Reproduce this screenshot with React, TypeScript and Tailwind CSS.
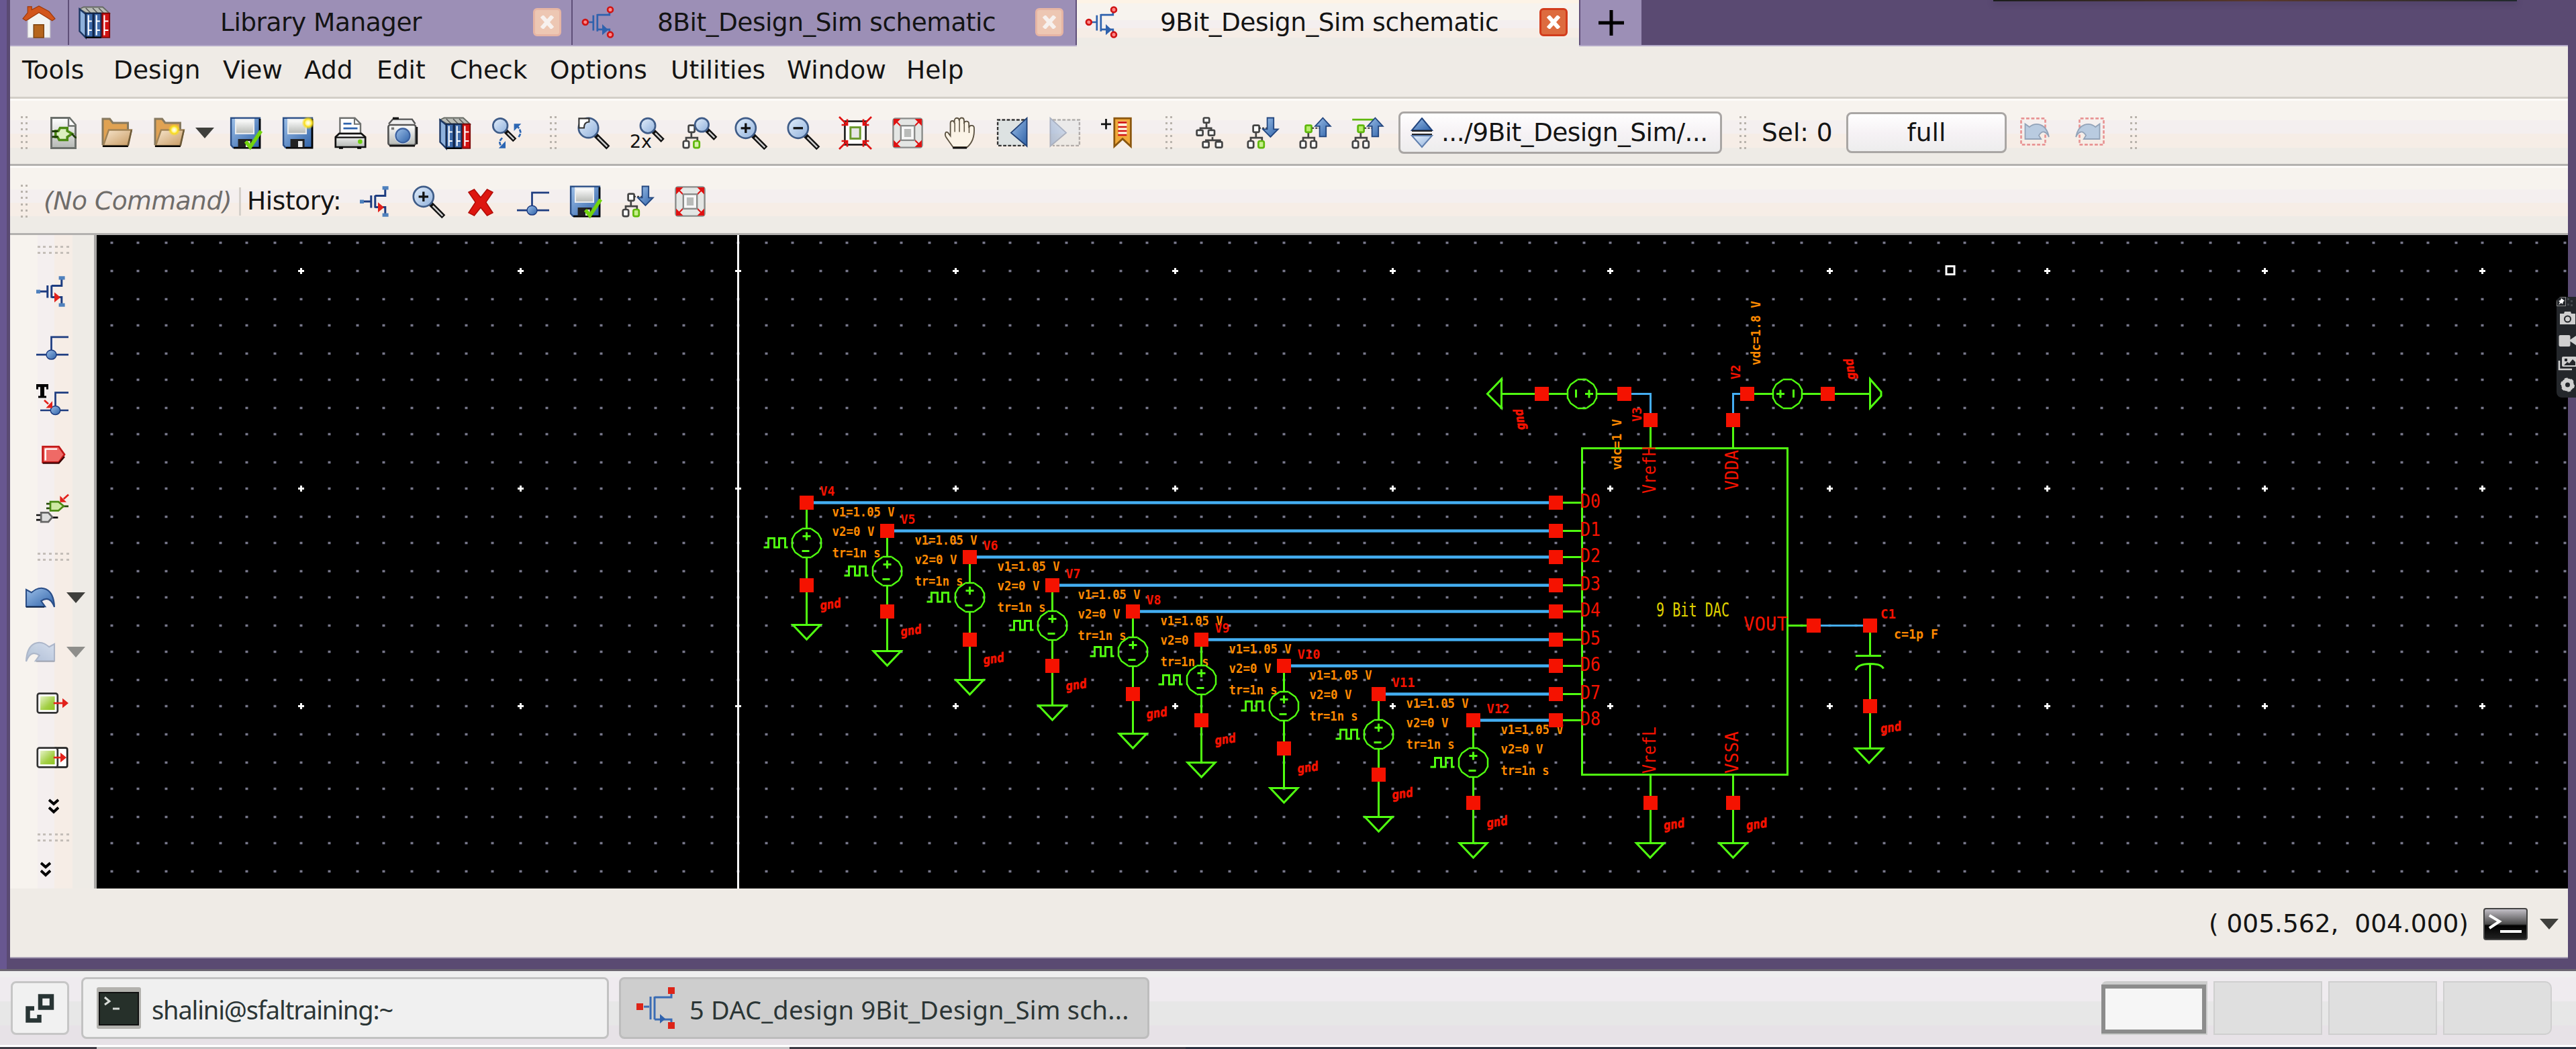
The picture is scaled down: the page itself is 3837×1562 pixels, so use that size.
import React from "react";

type Kids = { children?: React.ReactNode };

/* ---------- toolbar icons, drawn on a 16 x 16 pixel grid ---------- */

function Ico({ children, dim = false }: Kids & { dim?: boolean }) {
  return (
    <svg viewBox="0 0 16 16" className={dim ? "h-12 w-12 shrink-0 overflow-visible opacity-35" : "h-12 w-12 shrink-0 overflow-visible"} fill="none">
      {children}
    </svg>
  );
}

function Defs() {
  return (
    <svg className="absolute h-0 w-0">
      <defs>
        <linearGradient id="blue" x1="0" y1="0" x2="1" y2="1">
          <stop offset="0" stopColor="#9cbfe8" />
          <stop offset="1" stopColor="#2f62a8" />
        </linearGradient>
        <linearGradient id="glass" x1="0" y1="0" x2="1" y2="1">
          <stop offset="0" stopColor="#e4effb" />
          <stop offset="1" stopColor="#8fb0dc" />
        </linearGradient>
        <linearGradient id="tan" x1="0" y1="0" x2="1" y2="1">
          <stop offset="0" stopColor="#f8e6cd" />
          <stop offset="1" stopColor="#c79a62" />
        </linearGradient>
        <linearGradient id="grey" x1="0" y1="0" x2="0" y2="1">
          <stop offset="0" stopColor="#ffffff" />
          <stop offset="1" stopColor="#b5b8b4" />
        </linearGradient>
        <linearGradient id="green" x1="0" y1="0" x2="1" y2="1">
          <stop offset="0" stopColor="#e6f3c6" />
          <stop offset="0.6" stopColor="#a3cf45" />
          <stop offset="1" stopColor="#8fc31f" />
        </linearGradient>
        <linearGradient id="term" x1="0" y1="0" x2="0" y2="1">
          <stop offset="0" stopColor="#c8c4cc" />
          <stop offset="0.5" stopColor="#4a4a4a" />
          <stop offset="0.55" stopColor="#000" />
          <stop offset="1" stopColor="#222" />
        </linearGradient>
        <radialGradient id="spark">
          <stop offset="0" stopColor="#fff" />
          <stop offset="0.35" stopColor="#fff7a0" />
          <stop offset="0.6" stopColor="#f9dc1a" />
          <stop offset="1" stopColor="#f9dc1a" stopOpacity="0" />
        </radialGradient>
      </defs>
    </svg>
  );
}

const DocIcon = () => (
  <Ico>
    <path d="M1.5 .5h9l3 3.5v11.5h-12z" fill="url(#grey)" stroke="#6c706c" />
    <path d="M10 .5v4h3.5" fill="#fff" stroke="#6c706c" strokeWidth=".8" />
    <path d="M3.600 7h1.400l.8-1.500h3.600v1.500l2.400 1.400-2.400 1.600v1.500H5.400L4.600 10H3.600z" fill="#dcefc0" stroke="#4b8a14" strokeWidth="1.200" />
    <path d="M1.800 7.200h3M1.800 9.900h3" stroke="#1f3b08" strokeWidth="1" />
    <path d="M11.500 8.500c1 0 1 1.800 2.500 1.800" stroke="#1f3b08" strokeWidth=".9" />
  </Ico>
);

const FolderIcon = ({ spark = false }: { spark?: boolean }) => (
  <Ico>
    <path d="M1 14V1h3.5L6 3h7.5v4" fill="#e0a253" stroke="#86795f" />
    <path d="M1.3 14.3 4 6.5h11.3L13.4 14.3z" fill="url(#tan)" stroke="#a08256" strokeWidth=".8" />
    <path d="M1 14.6h12.6" stroke="#000" strokeWidth=".8" />
    <path d="M15.3 6.5 13.6 14.3" stroke="#6d5937" strokeWidth=".8" />
    {spark && <circle cx="10.5" cy="6.5" r="3" fill="url(#spark)" />}
  </Ico>
);

const SaveIcon = ({ mark }: { mark: "check" | "spark" }) => (
  <Ico>
    <path d="M.7.6h14.3v14.7H1.8L.7 14z" fill="url(#blue)" stroke="#2b4f86" strokeWidth=".8" />
    <path d="M15 1v14.4H2" stroke="#000" strokeWidth=".9" />
    <rect x="3" y="1.3" width="9" height="7" fill="url(#grey)" stroke="#e9ecee" strokeWidth=".7" />
    <rect x="4.2" y="11" width="7" height="4.2" fill="#222" />
    <rect x="8" y="12" width="2.2" height="3" fill="#e8e8e8" />
    {mark === "check" ? (
      <path d="M8 12.2 10.2 15 15.6 7" stroke="#72d40c" strokeWidth="1.8" />
    ) : (
      <circle cx="13" cy="3" r="3.2" fill="url(#spark)" />
    )}
  </Ico>
);

const PrintIcon = () => (
  <Ico>
    <path d="M2.8 9V.6h7.4L13 3.4V9" fill="#fff" stroke="#6f716f" strokeWidth=".8" />
    <path d="M10 .6v3h3" stroke="#6f716f" strokeWidth=".7" />
    <path d="M4.5 3.4h4M4.5 5.7h7" stroke="#2c62ad" strokeWidth=".9" />
    <path d="M.6 15V10l1.8-1.7h11L15.4 10v5z" fill="url(#grey)" stroke="#111" strokeWidth=".9" />
    <path d="M.6 10.2h14.8" stroke="#111" strokeWidth=".8" />
    <circle cx="12.8" cy="12.3" r="1.1" fill="#6fd010" />
    <path d="M2.3 15.3h2M11.4 15.3h2" stroke="#000" strokeWidth="1.2" />
  </Ico>
);

const CameraIcon = () => (
  <Ico>
    <path d="M1 3.5 3 1.2h9.6l1.6 2.3" fill="#eee" stroke="#555" strokeWidth=".8" />
    <path d="M3 .7h3" stroke="#111" />
    <rect x=".8" y="4" width="13.6" height="10" rx="1" fill="url(#grey)" stroke="#555" strokeWidth=".9" />
    <path d="M15 5v8.6M1.4 14.4h12.6" stroke="#111" strokeWidth=".8" />
    <circle cx="8" cy="9.3" r="4.1" fill="#dbe8f8" />
    <circle cx="8" cy="9.3" r="3.5" fill="url(#blue)" stroke="#3b5f9c" strokeWidth=".7" />
    <rect x="2.3" y="5.2" width="1.4" height="1.2" fill="#777" />
  </Ico>
);

const BooksIcon = () => (
  <Ico>
    <path d="M.5 1.5 2.500 .5h9.500l3.300 3H4z" fill="#b9bcb6" stroke="#666a63" strokeWidth=".6" />
    <path d="M3.600 1l2.400 2.400M7 1l2.400 2.400M10 1l2.400 2.400" stroke="#555" strokeWidth=".5" />
    <path d="M.5 1.500 3.600 4v11.700L.5 12.500z" fill="#8eb1dc" stroke="#1c3764" strokeWidth=".8" />
    <rect x="3.600" y="3.600" width="3.600" height="12" fill="#3c69a9" stroke="#12264a" strokeWidth=".7" />
    <rect x="7.600" y="3.600" width="3.600" height="12" fill="#3c69a9" stroke="#12264a" strokeWidth=".7" />
    <rect x="11.700" y="3.600" width="3.700" height="12" fill="#d31212" stroke="#7d0808" strokeWidth=".6" />
    <path d="M4.600 7.500h2M4.600 12h2M8.600 7.500h2M8.600 12h2M12.600 7.500h2.200M12.600 12h2.200M4.900 4.500v10M8.900 4.500v10M12.800 4.500v10" stroke="#fff" strokeWidth=".7" />
    <path d="M3.600 15.600h7.600" stroke="#000" strokeWidth=".8" />
  </Ico>
);

function Glass({ x = 0, y = 0, r = 4.8, sign }: { x?: number; y?: number; r?: number; sign?: "+" | "-" }) {
  const e = r * 0.72;
  return (
    <g transform={`translate(${x} ${y})`}>
      <path d={`M${e} ${e}L${r * 2} ${r * 2}`} stroke="#111" strokeWidth="2.4" />
      <path d={`M${e + 1} ${e + 1}L${r * 2 - 0.5} ${r * 2 - 0.5}`} stroke="#cfcfcf" strokeWidth=".8" />
      <circle r={r} fill="url(#glass)" stroke="#3f5c88" strokeWidth=".9" />
      {sign && <path d={sign === "+" ? "M-2.4 0h4.8M0-2.4v4.8" : "M-2.4 0h4.8"} stroke="#111" strokeWidth="1.1" />}
    </g>
  );
}

const SwapFindIcon = () => (
  <Ico>
    <Glass x={4.4} y={4.4} r={3.6} />
    <path d="M13.500 10c1.600-2 1-3.600-.8-5.400M5.400 10.500c-1.800 1.400-1.600 3 0 4.500" stroke="#2d66b3" strokeWidth=".9" strokeDasharray="1.800 .5" />
    <path d="M11.200 3.400h3.600L11.200 7zM7 12v3.600H3.600z" fill="#2d66b3" />
  </Ico>
);
const ZoomAreaIcon = () => (
  <Ico>
    <Glass x={5.5} y={5.5} r={4.9} />
    <path d="M.8 5.5V.8h5v1.700c-2 0-2.500 1.500-2.500 3z" fill="#fff" stroke="#333" strokeWidth=".7" />
  </Ico>
);
const Zoom2xIcon = () => (
  <Ico>
    <Glass x={9} y={4.4} r={3.7} />
    <text x="0" y="15.2" fontFamily="DejaVu Sans" fontSize="9" fill="#111" textLength="11" lengthAdjust="spacingAndGlyphs">2x</text>
  </Ico>
);
const ZoomIcon = ({ sign }: { sign: "+" | "-" }) => (
  <Ico>
    <Glass x={5.6} y={5.6} r={5} sign={sign} />
  </Ico>
);

function Tree({ a = "#fff", b = "#fff", x = 0 }: { a?: string; b?: string; x?: number }) {
  return (
    <g transform={`translate(${x} 0)`} stroke="#444" strokeWidth=".9">
      <path d="M4.6 8v2.4M2 12.2v-1.8h5.6v1.8" />
      <rect x="3.2" y="4.2" width="3" height="3.400" rx=".6" fill={a} stroke={a === "#fff" ? "#444" : "#5fb80c"} />
      <rect x=".6" y="12" width="2.8" height="3.4" rx=".8" fill="#fff" />
      <rect x="5.8" y="12" width="2.8" height="3.4" rx=".8" fill={b} stroke={b === "#fff" ? "#444" : "#5fb80c"} />
    </g>
  );
}
const ZoomTreeIcon = () => (
  <Ico>
    <Tree b="#d8f2b0" />
    <Glass x={9.8} y={4} r={3.4} />
  </Ico>
);
const TreeIcon = () => (
  <Ico>
    <g stroke="#444" strokeWidth=".9" fill="#fff">
      <path d="M6 3v2.5M3 8V5.6h5.4V8M9 10v2M5.8 14v-2.4h7V14" fill="none" />
      <rect x="4.6" y=".5" width="2.8" height="2.4" rx=".5" />
      <rect x="1.2" y="6.6" width="3" height="2.6" rx=".5" />
      <rect x="7" y="6.6" width="3" height="2.6" rx=".5" />
      <rect x="4.2" y="12.4" width="3" height="2.8" rx=".6" />
      <rect x="10.6" y="12.4" width="3.2" height="2.8" rx=".6" />
    </g>
  </Ico>
);
const DescendIcon = () => (
  <Ico>
    <Tree b="#c8f08c" />
    <path d="M6 5.600h5" stroke="#333" strokeWidth=".7" strokeDasharray="1 .7" />
    <path d="M10.2.5h3.2v5.6h2.2L11.8 10 8 6.1h2.2z" fill="url(#blue)" stroke="#23467f" strokeWidth=".6" />
  </Ico>
);
const AscendIcon = ({ bar = false }: { bar?: boolean }) => (
  <Ico>
    <Tree a="#b6ee6c" />
    {bar && <path d="M.4 1.400h11" stroke="#5fb80c" strokeWidth=".9" />}
    <path d="M6.400 5.600h4" stroke="#333" strokeWidth=".7" strokeDasharray="1 .7" />
    <path d="M10.2 9.8h3.2V4.6h2.2L11.8.5 8 4.6h2.2z" fill="url(#blue)" stroke="#23467f" strokeWidth=".6" />
  </Ico>
);

const FitIcon = ({ out = false }: { out?: boolean }) =>
  out ? (
    <Ico>
      <rect x=".8" y=".8" width="14.4" height="14.4" rx="1.2" fill="#e4e6e4" stroke="#8a8c8a" strokeWidth=".8" />
      <path d="M1 1h3.500L1 4.500zM15 1h-3.500l3.500 3.500zM1 15h3.500l-3.500-3.500zM15 15h-3.500l3.500-3.500z" fill="#e01212" />
      <path d="M2 2 5 5M14 2l-3 3M2 14l3-3M14 14l-3-3" stroke="#e01212" strokeWidth=".7" />
      <rect x="4.6" y="4.4" width="6.800" height="7.2" fill="#f7f7f7" stroke="#8a8c8a" strokeWidth=".8" />
      <rect x="6.3" y="6" width="3.4" height="4" fill="#b9bbb9" />
    </Ico>
  ) : (
    <Ico>
      <rect x="2.8" y="2.2" width="10.4" height="11.6" fill="#fff" stroke="#222" strokeWidth=".9" />
      <rect x="5.6" y="5.2" width="4.8" height="5.6" fill="#e6e6e6" stroke="#6b9a2c" strokeWidth="1" />
      <path d="M0 0 3.6 3.6M16 0l-3.6 3.6M0 16l3.6-3.6M16 16l-3.6-3.6M4 1.200V4H1.200M12 1.200V4h2.800M4 14.800V12H1.200M12 14.800V12h2.800" stroke="#e01212" strokeWidth=".9" />
    </Ico>
  );

const HandIcon = () => (
  <Ico>
    <path d="M4.500 15 1 10C.2 8.400 .8 7 2 7.800L3.200 9.400V3.200c0-1.600 2-1.600 2 0V2c0-1.900 2.400-1.900 2.400 0 0-2 2.400-2 2.400 0v1.400c0-1.600 2.400-1.600 2.400 0v2c.2-1.500 2.600-1.500 2.600 .2C15.200 9.400 14.400 12.600 11.600 15z" fill="#fbf3e6" stroke="#5b5140" strokeWidth=".6" />
    <path d="M5.400 3v4.500M7.700 2v5.500M10.100 3v4.500M12.500 5v3" stroke="#5b5140" strokeWidth=".5" />
    <path d="M4.4 15.4h7" stroke="#111" strokeWidth=".9" />
  </Ico>
);
const PrevIcon = ({ dim = false }: { dim?: boolean }) => (
  <Ico dim={dim}>
    <g transform={dim ? "matrix(-1 0 0 1 16 0)" : undefined}>
      <path d="M14 1.5H.7v12.8H14" fill="#dde2e2" stroke="#333" strokeWidth=".8" strokeDasharray="1.6 .8" />
      <path d="M15.2.6v14L7.3 7.9z" fill="url(#blue)" stroke="#1f3f73" strokeWidth=".6" />
    </g>
  </Ico>
);
const BookmarkIcon = () => (
  <Ico>
    <path d="M0 3.6h5M2.5 1v5.2" stroke="#111" strokeWidth=".9" />
    <path d="M6.6.7h8.2v14l-4.1-3.8-4.1 3.8z" fill="#f0a93a" stroke="#8a560e" strokeWidth=".9" />
    <path d="M8.6 2.2h4.2v7H8.6z" fill="#fff3dc" />
    <path d="M8.4 2.8h4.4M8.4 5h4.4M8.4 7h4.4M8.4 9h4.4" stroke="#d11515" strokeWidth=".9" />
  </Ico>
);
const SelHistIcon = ({ flip = false }: { flip?: boolean }) => (
  <Ico>
    <g transform={flip ? "matrix(-1 0 0 1 16 0)" : undefined}>
      <rect x=".5" y=".8" width="12" height="13" stroke="#e89494" strokeWidth=".9" strokeDasharray="1.6 .9" />
      <path d="M2.500 3.500 4.600 5C7.600 2.600 13 3 14.300 10c-1.400-3-3.400-3.400-5-.8L10.400 11H2.500z" fill="#b9cbe0" stroke="#93a3b8" strokeWidth=".6" />
    </g>
  </Ico>
);

/* ---------- editing icons ---------- */

const InstanceIcon = () => (
  <Ico>
    <path d="M2 8h3.5M5.6 5v6.2M7.6 5v6.2M7.6 5.2h5V1.5M7.6 10.8h5v3.6" stroke="#1d3c80" strokeWidth="1" />
    <path d="M9 8.4v5l3-2.5z" fill="#e2211b" />
    <path d="M0 7.2h2v1.8H0zM11.2.4h3v1.8h-3zM11.2 13.8h3v1.8h-3z" fill="#4f81bd" />
  </Ico>
);
const WireIcon = () => (
  <Ico>
    <path d="M0 12.4h16M7.5 12.4V3.6H16" stroke="#1d3c80" strokeWidth=".9" />
    <ellipse cx="7.5" cy="12.4" rx="2.5" ry="2.3" fill="url(#blue)" stroke="#1d3c80" strokeWidth=".5" />
  </Ico>
);
const LabelIcon = () => (
  <Ico>
    <path d="M2 13h14M9.5 13V4.2H16" stroke="#1d3c80" strokeWidth=".9" />
    <ellipse cx="9.5" cy="13" rx="2.4" ry="2.2" fill="url(#blue)" stroke="#1d3c80" strokeWidth=".5" />
    <path d="M0 0h6v2.6H5V1.4H4v4.4h1v1H1v-1h1V1.4H1v1.2H0z" fill="#000" />
    <path d="M4 8l2 1.8" stroke="#e2211b" strokeWidth=".9" />
    <path d="M8 8.4v3.4H4.8z" fill="#e2211b" />
  </Ico>
);
const PinIcon = () => (
  <Ico>
    <path d="M3.2 4h8L14 7.9l-2.8 3.9h-8z" fill="#ef6a66" stroke="#c11616" strokeWidth=".9" />
    <path d="M4.4 5.2h6M4.6 5v5.8" stroke="#fff" strokeWidth=".8" />
    <path d="M3.2 12.2h8L14 9" stroke="#3d0505" strokeWidth=".8" />
  </Ico>
);
const PlugIcon = () => (
  <Ico>
    <path d="M5 5.4h2M5 7.6h2M13 6.6h3" stroke="#274d0a" strokeWidth=".9" />
    <path d="M7 4.4h4l2.6 2.1L11 8.8H7z" fill="#cfe8a3" stroke="#4b8a14" strokeWidth=".9" />
    <path d="M0 11h2.4M0 13.4h2.4M7.8 12.2h3" stroke="#111" strokeWidth=".9" />
    <path d="M2.4 9.8H6l2 2.2-2 2.4H2.4z" fill="#ddd" stroke="#666" strokeWidth=".9" />
    <path d="M16 .8 13.6 3" stroke="#e2211b" strokeWidth=".9" />
    <path d="M11.8 1.4v3.2H15z" fill="#e2211b" />
  </Ico>
);
const UndoIcon = ({ redo = false }: { redo?: boolean }) => (
  <Ico dim={redo}>
    <g transform={redo ? "matrix(-1 0 0 1 16 0)" : undefined}>
      <path d="M1 4 3.6 5.4C8 1.4 14.6 2.6 15 12.6 13.6 8.8 11.4 7.6 8.4 9.6L10.4 12.4H1z" fill="url(#blue)" stroke="#2a4e88" strokeWidth=".7" />
      <path d="M1 12.6h9" stroke="#0d2244" strokeWidth=".6" />
    </g>
  </Ico>
);
const MoveIcon = ({ copy = false }: { copy?: boolean }) => (
  <Ico>
    {copy && <rect x="9" y="3.2" width="6.4" height="9.6" rx=".8" fill="#fff" stroke="#222" strokeWidth=".9" />}
    <rect x=".6" y="3.2" width="10" height="9.6" rx="1" fill="#fff" stroke="#333" strokeWidth=".9" />
    <rect x="2" y="4.6" width="7.2" height="6.8" fill="url(#green)" />
    <path d="M8.6 8h5" stroke="#e2211b" strokeWidth=".9" />
    <path d={copy ? "M12 5.6v4.8L15 8z" : "M13 5.6v4.8L16 8z"} fill="#e2211b" />
  </Ico>
);
const CrossIcon = () => (
  <Ico>
    <path d="M2 3.400 4.800 2l3.200 4 3.200-4 2.800 1.400L10.600 8.400l3.400 5.200L11.200 15 8 11l-3.200 4-2.800-1.400 3.400-5.200z" fill="#dd1610" stroke="#b10c08" strokeWidth=".5" />
  </Ico>
);
const NmosIcon = () => (
  <Ico>
    <path d="M3 8h2.4M5.6 4.6v7.6M7.6 4v8.6M7.6 4.4h6V2M7.6 11.6h6V14" stroke="#2f62ad" strokeWidth=".9" />
    <path d="M10 9v5.4l3-2.6z" fill="#2f62ad" />
    <circle cx="1.6" cy="8" r="1.3" fill="#f88" stroke="#cf1414" strokeWidth=".9" />
    <circle cx="14" cy="1.8" r="1.3" fill="#f88" stroke="#cf1414" strokeWidth=".9" />
    <circle cx="14" cy="14.2" r="1.3" fill="#f88" stroke="#cf1414" strokeWidth=".9" />
  </Ico>
);
const HomeIcon = () => (
  <Ico>
    <path d="M2.4 7.4 8 2.4l5.6 5V16H2.4z" fill="#f3f3f1" stroke="#c4c0c8" strokeWidth=".4" />
    <path d="M0 6.600 2.400 3.600V.6h2v1.600L8 .3 13 3l3 3.600-1.400 1L8 3.600 1.600 7.600z" fill="#d2551c" stroke="#9d3a0c" strokeWidth=".4" />
    <path d="M5.4 9.6h5V16h-5z" fill="#b5651d" stroke="#7d4410" strokeWidth=".5" />
  </Ico>
);

/* ---------- small chrome pieces ---------- */

const Grip = ({ className = "" }: { className?: string }) => (
  <div className={`grid h-[50px] w-[13px] shrink-0 grid-cols-2 content-between justify-between ${className}`}>
    {Array.from({ length: 12 }, (_, i) => (
      <span key={i} className="h-[3px] w-[3px] bg-[#b9b3ac]" />
    ))}
  </div>
);
const GripH = () => (
  <div className="grid w-[52px] shrink-0 grid-cols-6 gap-y-[6px]">
    {Array.from({ length: 12 }, (_, i) => (
      <span key={i} className="h-[3px] w-[4px] bg-[#c4beb8]" />
    ))}
  </div>
);
const Tri = ({ dim = false }: { dim?: boolean }) => (
  <svg viewBox="0 0 28 16" className="h-4 w-7 shrink-0">
    <path d="M0 0h28L14 16z" fill={dim ? "#8e8e8b" : "#3f3f3c"} />
  </svg>
);
const Chevrons = () => (
  <svg viewBox="0 0 16 25" className="h-[25px] w-4 shrink-0" fill="none" stroke="#000" strokeWidth="4">
    <path d="M1 3l7 6 7-6M1 14.500l7 6.500 7-6.500" />
  </svg>
);
const CloseBox = ({ active = false }: { active?: boolean }) => (
  <div
    className={
      active
        ? "flex h-[42px] w-[42px] items-center justify-center rounded-[6px] border-[3px] border-[#d23c1c] bg-[#dd6b3f]"
        : "flex h-[42px] w-[42px] items-center justify-center rounded-[6px] border-[3px] border-[#e6b5a4] bg-[#edc7b3]"
    }
  >
    <svg viewBox="0 0 20 20" className="h-5 w-5" stroke={active ? "#fff" : "#f7f1ee"} strokeWidth="6">
      <path d="M2 1 18 19M18 1 2 19" />
    </svg>
  </div>
);

/* ---------- schematic ---------- */

const GREEN = "#50ff10";
const RED = "#f51200";
const BLUE = "#45aef2";
const ORANGE = "#ff8a00";

function Txt({ x, y, w, s = 20, c = RED, up = false, bold = true, children }: { x: number; y: number; w: number; s?: number; c?: string; up?: boolean; bold?: boolean; children: string }) {
  return (
    <text
      x={x}
      y={y}
      fontSize={s}
      fill={c}
      fontWeight={bold ? 700 : 400}
      fontFamily="DejaVu Sans Mono, monospace"
      textLength={w}
      lengthAdjust="spacingAndGlyphs"
      transform={up ? `rotate(-90 ${x} ${y})` : undefined}
    >
      {children}
    </text>
  );
}
const Sq = ({ x, y }: { x: number; y: number }) => <rect x={x - 10.5} y={y - 10.5} width="21" height="21" fill={RED} />;

/* ground net name, drawn at a slight slant */
function Gnd({ x, y, rot = 0 }: { x: number; y: number; rot?: number }) {
  return (
    <g transform={`translate(${x} ${y}) rotate(${rot}) skewY(-8)`}>
      <text fontSize="19" fontWeight="700" fill={RED} stroke={RED} strokeWidth=".6" fontFamily="DejaVu Sans Mono, monospace" textLength="31" lengthAdjust="spacingAndGlyphs">
        gnd
      </text>
    </g>
  );
}
const Arrow = ({ x, y, rot = 0 }: { x: number; y: number; rot?: number }) => (
  <path d="M-20.500 0h41L0 21.500z" transform={`translate(${x} ${y}) rotate(${rot})`} />
);
const Ring = ({ x, y }: { x: number; y: number }) => (
  <g strokeWidth="2.500">
    <path d={`M${x - 7} ${y - 21.5}h14M${x - 7} ${y + 21.5}h14M${x - 21.5} ${y - 7}v14M${x + 21.5} ${y - 7}v14`} />
    <path
      d={`M${x - 7} ${y - 21}L${x - 17} ${y - 14}L${x - 21.5} ${y - 6}M${x + 7} ${y - 21}L${x + 17} ${y - 14}L${x + 21.5} ${y - 6}M${x - 7} ${y + 21}L${x - 17} ${y + 14}L${x - 21.5} ${y + 6}M${x + 7} ${y + 21}L${x + 17} ${y + 14}L${x + 21.5} ${y + 6}`}
    />
  </g>
);

type Src = { n: string; x: number; y: number; c: number; sq: number; g: number; tx: number };
const sources: Src[] = [
  { n: "V4", x: 1201.5, y: 748.5, c: 60, sq: 123, g: 182, tx: 38 },
  { n: "V5", x: 1321.5, y: 790.5, c: 60, sq: 120, g: 179, tx: 41 },
  { n: "V6", x: 1444.5, y: 829.5, c: 60, sq: 123, g: 183, tx: 41 },
  { n: "V7", x: 1567.5, y: 871.5, c: 60, sq: 120, g: 179, tx: 38 },
  { n: "V8", x: 1687.5, y: 910.5, c: 60, sq: 123, g: 182, tx: 41 },
  { n: "V9", x: 1789.5, y: 952.5, c: 60, sq: 120, g: 183, tx: 41 },
  { n: "V10", x: 1912.5, y: 991.5, c: 60, sq: 123, g: 182, tx: 38 },
  { n: "V11", x: 2053.5, y: 1033.5, c: 60, sq: 120, g: 183, tx: 41 },
  { n: "V12", x: 2194.5, y: 1072.5, c: 63, sq: 123, g: 183, tx: 41 },
];

const colX = (k: number) => 448.5 + 3 * Math.ceil(13.536 * k);
const rowY = (k: number) => 403.5 + 3 * (k < 0 ? -14 : Math.ceil(13.52 * k - 0.35));
const cols = Array.from({ length: 91 }, (_, i) => i - 7);
const rows = Array.from({ length: 24 }, (_, i) => i - 1);

function Grid() {
  const minor: string[] = [];
  const major: string[] = [];
  for (const i of cols)
    for (const j of rows) {
      const x = colX(i);
      const y = rowY(j);
      if (i % 8 === 0 && j % 8 === 0) major.push(`M${x - 4.5} ${y}h9M${x} ${y - 4.5}v9`);
      else minor.push(`M${x - 2} ${y}h4`);
    }
  return (
    <g>
      <path d={minor.join("")} stroke="#77778a" strokeWidth="3.500" />
      <path d={major.join("")} stroke="#fff" strokeWidth="3" />
    </g>
  );
}

function Schematic() {
  return (
    <svg viewBox="144 350 3681 973" className="h-[973px] w-[3681px] shrink-0 bg-black" fill="none" strokeWidth="3">
      <Grid />
      <path d="M1099.500 350v973" stroke="#fff" />
      <rect x="2899" y="396.500" width="12" height="12" stroke="#fff" />

      <g fill={ORANGE}>
        {sources.map((s) => (
          <g key={s.n}>
            <Txt x={s.x + s.tx} y={s.y + 20} w={93} c={ORANGE}>v1=1.05 V</Txt>
            <Txt x={s.x + s.tx} y={s.y + 49} w={63} c={ORANGE}>v2=0 V</Txt>
            <Txt x={s.x + s.tx} y={s.y + 81} w={72} c={ORANGE}>tr=1n s</Txt>
            <Txt x={s.x + 20} y={s.y - 11} w={s.n.length > 2 ? 34 : 22}>{s.n}</Txt>
            <Gnd x={s.x + 20} y={s.y + s.sq + 37} />
          </g>
        ))}
      </g>

      <g stroke="#2f7fae" strokeWidth="5">
        {sources.map((s) => (
          <path key={s.n} d={`M${s.x} ${s.y}H2317`} />
        ))}
      </g>
      <g stroke={BLUE}>
        {sources.map((s) => (
          <path key={s.n} d={`M${s.x} ${s.y}H2317`} />
        ))}
        <path d="M2419.500 586.500h39v39M2602.500 586.500h-21v39M2701.500 931.500h84" />
      </g>

      <g stroke={GREEN}>
        {sources.map((s) => {
          const cy = s.y + s.c;
          return (
            <g key={s.n}>
              <path d={`M${s.x} ${s.y}V${cy - 21}M${s.x} ${cy + 21}V${s.y + s.g}M2317 ${s.y}H2356`} />
              <Ring x={s.x} y={cy} />
              <path d={`M${s.x - 6} ${cy - 10}h12M${s.x} ${cy - 16}v12M${s.x - 7} ${cy + 12}h11`} />
              <path d={`M${s.x - 64} ${cy + 6.5}h7v-13.500h9v13.500h7v-13.500h9v13.500h4`} />
              <Arrow x={s.x} y={s.y + s.g} />
            </g>
          );
        })}
        <path d="M2356.500 667.500h306v486h-306z" />
        <path d="M2236.500 586.500H2335M2378 586.500h42M2458.500 625.500v42M2581.500 625.500v42M2602.500 586.500h38M2683.500 586.500h102" />
        <Ring x={2356.5} y={586.5} />
        <Ring x={2662.5} y={586.5} />
        <path d="M2347.500 580v12M2361 586.500h12M2367 580.500v12M2646 586.500h12M2652 580.500v12M2671.500 580v12" />
        <path d="M2236.500 564.500v43L2215.500 586.500zM2785.500 564.500v43l16.500-18v-6z" />
        <path d="M2662.500 931.500h39M2785.500 931.500v45M2764 976.500h38M2785.500 988.500v126M2764 998c2-6 9-9.500 21.500-9.500s18 3 20 7" />
        <Arrow x={2784} y={1114.5} />
        <path d="M2458.500 1153.500v102M2581.500 1153.500v102" />
        <Arrow x={2458} y={1255.5} />
        <Arrow x={2581.5} y={1255.5} />
      </g>

      {sources.map((s, i) => (
        <g key={s.n}>
          <Sq x={s.x} y={s.y} />
          <Sq x={s.x} y={s.y + s.sq} />
          <Sq x={2317.5} y={s.y} />
          <Txt x={2354} y={s.y + 7.5} w={30} s={28} bold={false}>{`D${i}`}</Txt>
        </g>
      ))}
      {[
        [2296.5, 586.5],
        [2419.5, 586.5],
        [2458.5, 625.5],
        [2581.5, 625.5],
        [2602.5, 586.5],
        [2722.5, 586.5],
        [2701.5, 931.5],
        [2785.5, 931.5],
        [2785.5, 1051.5],
        [2458.5, 1195.5],
        [2581.5, 1195.5],
      ].map(([x, y]) => (
        <Sq key={`${x}-${y}`} x={x} y={y} />
      ))}

      <Txt x={2466} y={735} w={70} s={27} bold={false} up>VrefH</Txt>
      <Txt x={2589} y={730} w={60} s={27} bold={false} up>VDDA</Txt>
      <Txt x={2466} y={1152} w={70} s={27} bold={false} up>VrefL</Txt>
      <Txt x={2589} y={1152} w={63} s={27} bold={false} up>VSSA</Txt>
      <Txt x={2445} y={628} w={22} up>V3</Txt>
      <Txt x={2592} y={565} w={22} up>V2</Txt>
      <Txt x={2415} y={700} w={76} c={ORANGE} up>vdc=1 V</Txt>
      <Txt x={2622} y={544} w={96} c={ORANGE} up>vdc=1.8 V</Txt>
      <Txt x={2467} y={918} w={109} s={28} c="#e0d400" bold={false}>9 Bit DAC</Txt>
      <Txt x={2597} y={938.5} w={66} s={28} bold={false}>VOUT</Txt>
      <Txt x={2801} y={920.5} w={23}>C1</Txt>
      <Txt x={2821} y={951} w={66} c={ORANGE}>c=1p F</Txt>
      <Gnd x={2801} y={1092} />
      <Gnd x={2478} y={1236} />
      <Gnd x={2601} y={1236} />
      <Gnd x={2272} y={640} rot={-90} />
      <Gnd x={2764} y={565} rot={-90} />
    </svg>
  );
}

/* ---------- overlay of the screen recorder ---------- */

const Recorder = () => (
  <div className="absolute right-0 top-[442px] flex h-[150px] w-[29px] flex-col overflow-hidden rounded-l-[8px] bg-[#24272b]">
    <svg viewBox="0 0 29 150" className="h-[150px] w-[29px]" fill="#cfcfcf">
      <rect x=".5" y=".5" width="13" height="13" fill="none" stroke="#888" />
      <path d="M7 2l5 4-2 1-1 4-2-2-4 3 2-4-2-2 3-1z" fill="#fff" />
      <path d="M16 2h3v3h-3zM21 5h3v3h-3zM16 10h3v3h-3zM21 11h3v3h-3z" fill="#43474c" />
      <path d="M5 25h6l1-3h9l1 3h6v16H5z" />
      <circle cx="16.500" cy="33" r="4.500" fill="none" stroke="#24272b" strokeWidth="2" />
      <rect x="3.500" y="57" width="17" height="17" rx="2" />
      <path d="M20 64l9-6v14l-9-6z" />
      <path d="M4 95v13h19" fill="none" stroke="#cfcfcf" strokeWidth="2.500" />
      <rect x="8" y="89" width="22" height="15" rx="2" />
      <path d="M11 102l5-5 3 2 5-6 4 4v5zM12 92h4v4h-4z" fill="#24272b" />
      <circle cx="16.500" cy="131" r="6.500" fill="none" stroke="#cfcfcf" strokeWidth="6" />
      <circle cx="16.500" cy="131" r="9" fill="none" stroke="#cfcfcf" strokeWidth="3" strokeDasharray="4.700 4.700" />
    </svg>
  </div>
);

const menu: [string, string][] = [
  ["Tools", "w-[136px]"],
  ["Design", "w-[163px]"],
  ["View", "w-[121px]"],
  ["Add", "w-[108px]"],
  ["Edit", "w-[109px]"],
  ["Check", "w-[149px]"],
  ["Options", "w-[180px]"],
  ["Utilities", "w-[173px]"],
  ["Window", "w-[178px]"],
  ["Help", "w-[120px]"],
];

export default function App() {
  return (
    <div className="relative flex h-[1562px] w-[3837px] flex-col overflow-hidden bg-[#5a4a72] font-['DejaVu_Sans',sans-serif] text-[37.5px] leading-none text-[#141414]">
      <Defs />
      <div className="absolute left-[2969px] top-0 h-[2px] w-[780px] bg-linear-to-r from-[#1b1d1c] via-[#5a382c] to-[#20282c] shadow-[0_3px_8px_#3b304e]" />

      <div className="flex h-[1443px] border-l-[10px] border-[#685790] pl-[5px]">
        <div className="flex w-[3810px] flex-col">
          {/* window tabs */}
          <div className="flex h-[69px] shrink-0 border-b-2 border-[#b4a9c8]">
            <div className="flex w-[88px] items-center justify-center border-r-2 border-[#5f4f78] bg-[#9c8fb6] pb-1">
              <HomeIcon />
            </div>
            <div className="flex w-[750px] items-center border-r-2 border-[#5f4f78] bg-[#9c8fb6] pb-[2px] pl-[14px]">
              <BooksIcon />
              <span className="w-[629px] whitespace-nowrap pl-[163px] pt-[2px] tracking-[-0.5px]">Library Manager</span>
              <CloseBox />
            </div>
            <div className="flex w-[751px] items-center border-r-2 border-[#5f4f78] bg-[#9c8fb6] pb-[2px] pl-[14px]">
              <NmosIcon />
              <span className="w-[627px] whitespace-nowrap pl-[64px] pt-[2px] tracking-[-0.5px]">8Bit_Design_Sim schematic</span>
              <CloseBox />
            </div>
            <div className="flex h-[69px] w-[748px] items-center bg-[linear-gradient(to_bottom,#fdf3e6_0_5px,#f7f3ee_5px_30px,#f4efef_30px_42px,#f6ede6_42px_56px,#eeebe6_56px)] pb-1 pl-[13px]">
              <NmosIcon />
              <span className="w-[628px] whitespace-nowrap pl-[63px] pt-[2px] tracking-[-0.5px]">9Bit_Design_Sim schematic</span>
              <CloseBox active />
            </div>
            <div className="flex w-[93px] items-center justify-center border-l-2 border-[#5f4f78] bg-[#9c8fb6]">
              <svg viewBox="0 0 38 38" className="h-[38px] w-[38px]" stroke="#000" strokeWidth="5">
                <path d="M0 19h38M19 0v38" />
              </svg>
            </div>
          </div>

          {/* menu bar */}
          <div className="flex h-[75px] shrink-0 bg-[#efebe6] pl-[18px] pt-[17px]">
            {menu.map(([label, w]) => (
              <span key={label} className={`whitespace-nowrap ${w}`}>{label}</span>
            ))}
          </div>

          {/* main toolbar */}
          <div className="flex h-[103px] shrink-0 items-center border-b-[3px] border-t-[3px] border-b-[#b3b1af] border-t-[#d3cfc8] bg-[linear-gradient(to_bottom,#fdfbf9_0_3px,#f7f3ee_3px_32px,#f4efef_32px_52px,#f6ede6_52px_73px,#eeebe6_73px)] pl-[16px] pt-1">
            <Grip className="mr-[28px]" />
            <div className="flex items-center gap-[30px]">
              <DocIcon />
              <FolderIcon />
              <FolderIcon spark />
            </div>
            <div className="ml-[15px] mr-[23px] flex"><Tri /></div>
            <div className="flex items-center gap-[30px]">
              <SaveIcon mark="check" />
              <SaveIcon mark="spark" />
              <PrintIcon />
              <CameraIcon />
              <BooksIcon />
              <SwapFindIcon />
            </div>
            <Grip className="ml-[39px] mr-[28px]" />
            <div className="flex items-center gap-[30px]">
              <ZoomAreaIcon />
              <Zoom2xIcon />
              <ZoomTreeIcon />
              <ZoomIcon sign="+" />
              <ZoomIcon sign="-" />
              <FitIcon />
              <FitIcon out />
              <HandIcon />
              <PrevIcon />
              <PrevIcon dim />
              <BookmarkIcon />
            </div>
            <Grip className="ml-[48px] mr-[30px]" />
            <div className="flex items-center gap-[30px]">
              <TreeIcon />
              <DescendIcon />
              <AscendIcon />
              <AscendIcon bar />
            </div>
            <div className="ml-[22px] flex h-[63px] w-[482px] shrink-0 items-center rounded-[8px] border-[3px] border-[#a9a6a4] bg-linear-to-b from-white via-[#f6f2f5] to-[#ededed] pl-[15px]">
              <svg viewBox="0 0 34 46" className="h-[46px] w-[34px] shrink-0">
                <path d="M17 1 32 19H2z" fill="url(#blue)" stroke="#23467f" strokeWidth="2" />
                <path d="M2 20h30M2 25h30" stroke="#222" strokeWidth="2" />
                <path d="M17 44 32 27H2z" fill="url(#glass)" stroke="#5f7fae" strokeWidth="2" />
              </svg>
              <span className="whitespace-nowrap pl-[12px] tracking-[-0.55px]">.../9Bit_Design_Sim/...</span>
            </div>
            <Grip className="ml-[26px] mr-[20px]" />
            <span className="w-[126px] shrink-0 whitespace-nowrap">Sel: 0</span>
            <div className="flex h-[61px] w-[239px] shrink-0 items-center justify-center rounded-[8px] border-[3px] border-[#a9a6a4] bg-linear-to-b from-white via-[#f6f2f5] to-[#ededed]">
              full
            </div>
            <div className="ml-[20px] flex gap-[30px]">
              <SelHistIcon />
              <SelHistIcon flip />
            </div>
            <Grip className="ml-[38px]" />
          </div>

          {/* command history */}
          <div className="flex h-[103px] shrink-0 items-center border-b-[3px] border-t-[3px] border-b-[#b3b1af] border-t-[#fdfbf9] bg-[linear-gradient(to_bottom,#f7f3ee_0_32px,#f4efef_32px_52px,#f6ede6_52px_72px,#eeebe6_72px)] pl-[16px] pt-[2px]">
            <Grip />
            <span className="ml-[21px] w-[277px] shrink-0 overflow-hidden whitespace-nowrap py-2 italic tracking-[-0.4px] text-[#6f6c6a]">(No Command)</span>
            <div className="ml-[14px] h-[42px] w-[3px] bg-[#d5d0ca]" />
            <span className="ml-[9px] w-[168px] shrink-0 tracking-[-0.4px]">History:</span>
            <div className="flex items-center gap-[30px]">
              <InstanceIcon />
              <ZoomIcon sign="+" />
              <CrossIcon />
              <WireIcon />
              <SaveIcon mark="check" />
              <DescendIcon />
              <FitIcon out />
            </div>
          </div>

          {/* edit tools beside the drawing */}
          <div className="flex h-[973px] shrink-0">
            <div className="flex w-[129px] shrink-0 flex-col items-center border-r-[4px] border-[#a9a7a5] bg-[linear-gradient(to_right,#f7f3ee_0_41px,#f4efef_41px_66px,#f6ede6_66px_93px,#eeebe6_93px)] pt-[16px]">
              <div className="ml-[8px] flex"><GripH /></div>
              <div className="mt-[32px] flex flex-col gap-[33px]">
                <InstanceIcon />
                <WireIcon />
                <LabelIcon />
                <PinIcon />
                <PlugIcon />
              </div>
              <div className="ml-[8px] mt-[41px] flex"><GripH /></div>
              <div className="ml-[7px] mt-[31px] flex items-center gap-[15px]">
                <UndoIcon />
                <Tri />
              </div>
              <div className="ml-[7px] mt-[33px] flex items-center gap-[15px]">
                <UndoIcon redo />
                <Tri dim />
              </div>
              <div className="mt-[28px] flex flex-col gap-[33px]">
                <MoveIcon />
                <MoveIcon copy />
              </div>
              <div className="ml-[4px] mt-[36px] flex"><Chevrons /></div>
              <div className="ml-[8px] mt-[28px] flex"><GripH /></div>
              <div className="mr-[20px] mt-[29px] flex"><Chevrons /></div>
            </div>
            <Schematic />
          </div>

          {/* status line */}
          <div className="flex h-[104px] shrink-0 items-center justify-end border-b-2 border-[#a79fb4] bg-[#efebe6] pt-[3px]">
            <span className="mr-[22px] whitespace-pre">( 005.562,  004.000)</span>
            <svg viewBox="0 0 66 48" className="h-12 w-[66px]">
              <rect x="1" y="1" width="64" height="46" rx="3" fill="url(#term)" stroke="#444" strokeWidth="2" />
              <path d="M9 11 24 20 9 30" fill="none" stroke="#fff" strokeWidth="4" />
              <path d="M25 35h32" stroke="#fff" strokeWidth="4" />
            </svg>
            <div className="ml-[18px] mr-[14px] flex"><Tri /></div>
          </div>
        </div>
      </div>

      {/* desktop panel */}
      <div className="flex h-[116px] shrink-0 items-start border-b-[3px] border-t-[3px] border-b-white border-t-[#6b6670] bg-[linear-gradient(to_bottom,#efefef_0_9px,#efebef_9px_45px,#e7e7e7_45px_81px,#e7e2e7_81px)] pl-[16px] font-['Noto_Sans',sans-serif] text-[38px] text-[#2b3535]">
        <div className="mt-[15px] flex h-[80px] w-[87px] items-center justify-center rounded-[8px] border-[3px] border-[#c6c6c6] bg-[#f1f1f1]">
          <svg viewBox="0 0 43 43" className="h-[43px] w-[43px]" fill="none" stroke="#283434" strokeWidth="6.500">
            <path d="M22 3.500h17v17H22zM13 21.500H3.500v18h17v-8.500" />
          </svg>
        </div>
        <div className="ml-[18px] mt-[9px] flex h-[92px] w-[786px] items-center rounded-[8px] border-[3px] border-[#c2c2c2] bg-[#f0f0f0] pl-[20px]">
          <svg viewBox="0 0 66 62" className="h-[62px] w-[66px]">
            <rect width="66" height="62" rx="3" fill="#b3b2ae" />
            <rect x="4" y="8" width="58" height="48" fill="#26302a" stroke="#111" strokeWidth="2" />
            <path d="M12 15l7 6-7 5M24 32h10" fill="none" stroke="#d8dcd8" strokeWidth="3" />
          </svg>
          <span className="whitespace-nowrap pl-[16px] pt-[3px] tracking-[-1.15px]">shalini@sfaltraining:~</span>
        </div>
        <div className="ml-[15px] mt-[9px] flex h-[92px] w-[790px] items-center rounded-[8px] border-[3px] border-[#bdbdbd] bg-[#cecece] pl-[22px]">
          <svg viewBox="0 0 60 66" className="h-[66px] w-[60px]" fill="none" stroke="#3a6cb4" strokeWidth="3">
            <path d="M12 31h8M22 16v34M28 16v34M28 17h25V8M28 50h25v6" />
            <path d="M36 42v14l8-7z" fill="#2f62ad" stroke="none" />
            <path d="M1 26h10v10H1zM48 2h10v10H48zM48 54h10v10H48z" fill="#dd2418" stroke="none" />
          </svg>
          <span className="whitespace-nowrap pl-[20px] pt-[3px] tracking-[0.22px]">5 DAC_design 9Bit_Design_Sim sch...</span>
        </div>
        <div className="ml-auto mr-[36px] mt-[15px] flex h-[80px] gap-[9px]">
          <div className="w-[158px] rounded-tl-[8px] bg-[#cdcdcd] pb-[2px] pt-[5px]">
            <div className="h-full w-[156px] border-[6px] border-[#8c8c8c] bg-[#f6f6f6]" />
          </div>
          <div className="w-[162px] border-2 border-[#cfcfcf] bg-[#dfdfdf]" />
          <div className="w-[162px] border-2 border-[#cfcfcf] bg-[#dfdfdf]" />
          <div className="w-[162px] rounded-r-[10px] border-2 border-[#cfcfcf] bg-[#dfdfdf]" />
        </div>
      </div>
      <div className="flex h-[3px] shrink-0 bg-[#2b3040]">
        <div className="w-[144px] bg-[#3d3a44]" />
        <div className="w-[1032px] bg-[#c4c2c4]" />
        <div className="w-[590px] bg-[#3d3a44]" />
      </div>

      <Recorder />
    </div>
  );
}
